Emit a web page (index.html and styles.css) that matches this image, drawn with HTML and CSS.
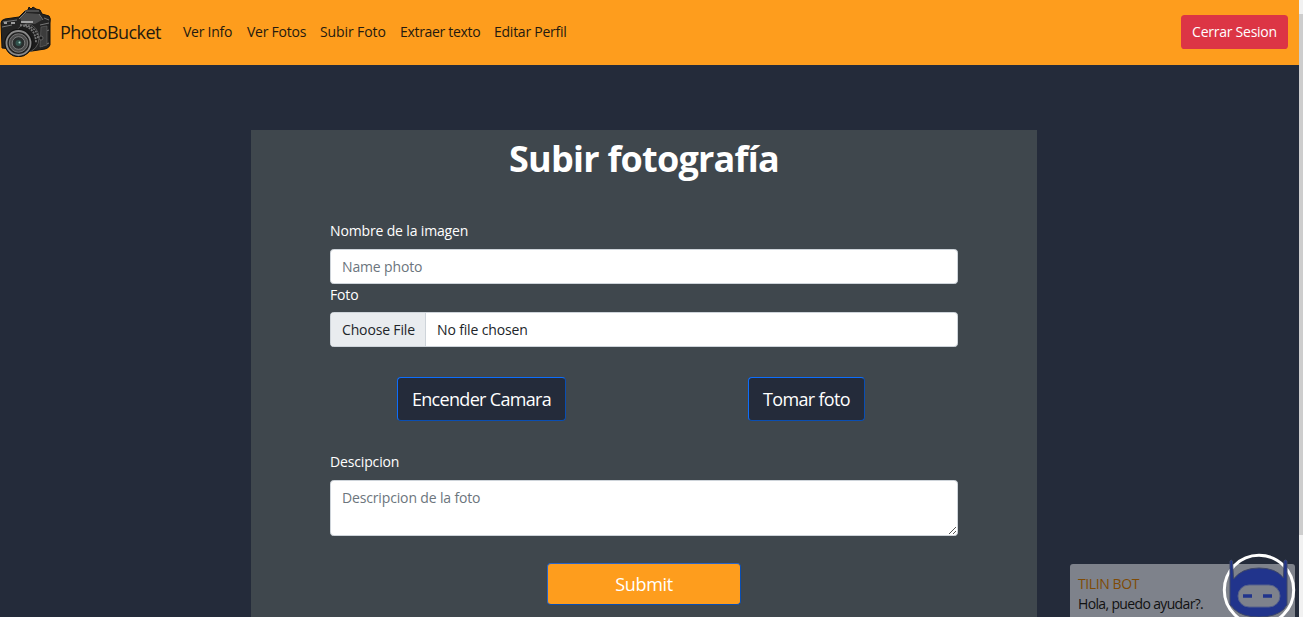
FILE: index.html
```html
<!DOCTYPE html>
<html lang="es">
<head>
<meta charset="utf-8">
<title>PhotoBucket</title>
<link rel="stylesheet" href="styles.css">
</head>
<body>
<div class="page">
  <header class="navbar">
    <svg class="logo" viewBox="0 0 52 52" width="52" height="52">
      <path d="M1 18 Q1 15 5 14 L19 12 25 6 28 5 29 2 31 4 33 2 36 4 40 5 42 9 49 11 Q51 13 50 18 L50 40 Q49 43 45 44 L32 46 2 43 Z" fill="#242424" stroke="#111" stroke-width="1"/>
      <path d="M20 13 L26 8 39 9 42 15 35 19 22 18 Z" fill="#4a4a4a"/>
      <path d="M21 17 L33 17" stroke="#bbb" stroke-width="1.6"/>
      <path d="M19 14 L26 7 M39 9 L43 15 M25 6 L39 6" stroke="#777" stroke-width="1"/>
      <path d="M3 17 L17 15 M2 22 L12 20 M44 13 L49 15 M40 20 L49 18 M44 27 L49 25 M42 41 L49 38" stroke="#777" stroke-width="1"/>
      <path d="M4 18 h3 M11 18 h4" stroke="#c4c4c4" stroke-width="1.5"/>
      <path d="M41 22 L47 21 V40 L40 42 Z" fill="#3c3c3c" stroke="#666" stroke-width=".6"/>
      <circle cx="41" cy="33" r="2" fill="#191919" stroke="#777" stroke-width=".7"/>
      <ellipse cx="27" cy="33" rx="12" ry="14" fill="#1b1b1b" stroke="#555"/>
      <path d="M20 20 Q36 22 36 38 M25 20 Q38 23 38 34" fill="none" stroke="#777" stroke-width="1.8" stroke-dasharray="2 1"/>
      <circle cx="18.500" cy="38" r="13.800" fill="#202020" stroke="#111"/>
      <circle cx="18.500" cy="38" r="12" fill="none" stroke="#8a8a8a" stroke-width="1.800"/>
      <circle cx="18.500" cy="38" r="9.200" fill="#4c4c4c" stroke="#777" stroke-width="1"/>
      <circle cx="18.500" cy="38" r="6.300" fill="#2a2e2e" stroke="#8a8a8a" stroke-width=".8"/>
      <circle cx="18.500" cy="38" r="3" fill="#31534d"/>
      <circle cx="19.500" cy="37.500" r="1" fill="#a7d5c8"/>
    </svg>
    <span class="brand">PhotoBucket</span>
    <nav class="links">
      <a class="l1">Ver Info</a><a class="l2">Ver Fotos</a><a class="l3">Subir Foto</a><a class="l4">Extraer texto</a><a class="l5">Editar Perfil</a>
    </nav>
    <button class="logout">Cerrar Sesion</button>
  </header>
  <main class="panel">
    <h1>Subir fotografía</h1>
    <form class="form">
      <label class="label-name">Nombre de la imagen</label>
      <div class="field placeholder">Name photo</div>
      <label class="label-file">Foto</label>
      <div class="field file"><span class="choose">Choose File</span><span class="chosen">No file chosen</span></div>
      <div class="actions">
        <button type="button" class="btn camera">Encender Camara</button>
        <button type="button" class="btn take">Tomar foto</button>
      </div>
      <label class="label-desc">Descipcion</label>
      <div class="area placeholder"><span>Descripcion de la foto</span>
        <svg class="grip" width="9" height="9" viewBox="0 0 9 9"><path d="M1 8 L8 1 M5 8 L8 5" stroke="#555" stroke-width="1"/></svg>
      </div>
      <button type="button" class="btn submit">Submit</button>
    </form>
  </main>
</div>
<div class="scrollbar"><div class="thumb"></div></div>
<aside class="chat">
  <div class="chat-name">TILIN BOT</div>
  <div class="chat-text">Hola, puedo ayudar?.</div>
</aside>
<svg class="bot" width="74" height="66" viewBox="0 0 74 66">
  <circle cx="37" cy="38" r="34.700" fill="none" stroke="#fff" stroke-width="3"/>
  <path d="M8 9 Q9 7 10.500 9 L11.500 27 Q20 16 37 16 Q54 16 61.500 26 L62 9 Q63.500 7 65 9 V53 Q63 55 62 57 Q54 65 37 65 Q20 65 12 57 Q10 54 8 53 Z" fill="#21348c" stroke="#3d4668" stroke-width="1"/>
  <rect x="16" y="33" width="42" height="22" rx="11" fill="#7e828c" stroke="#56618b" stroke-width="1"/>
  <path d="M21 44 h9 M41 44 h9" stroke="#21348c" stroke-width="3.400"/>
</svg>
</body>
</html>
```
FILE: styles.css
```css
* { box-sizing: border-box; }
body {
  margin: 0;
  width: 1303px;
  height: 617px;
  overflow: hidden;
  display: flex;
  background: #242b3a;
  color: #fff;
  font: 14px/22px "Open Sans", "Noto Sans", sans-serif;
  letter-spacing: -0.15px;
}
button { font: inherit; letter-spacing: inherit; color: #fff; padding: 0; white-space: nowrap; }
.page { width: 1299px; height: 617px; overflow: hidden; }
.navbar {
  height: 65px;
  background: #fe9d1d;
  color: #241a10;
  display: flex;
  align-items: center;
  padding: 0 11px 2px 0;
  letter-spacing: -0.25px;
}
.logo { display: block; margin-top: -1px; height: 52px; }
.brand { font-size: 18px; width: 131px; padding-left: 8px; letter-spacing: -0.58px; white-space: nowrap; }
.links { display: flex; flex: 1; white-space: nowrap; }
.l1 { width: 64px; }
.l2 { width: 73px; }
.l3 { width: 80px; letter-spacing: -0.1px; }
.l4 { width: 94px; letter-spacing: -0.32px; }
.logout {
  width: 107px;
  height: 34px;
  border: 0;
  border-radius: 3.600px;
  background: #dc3545;
}
.panel {
  width: 786px;
  height: 487px;
  margin: 65px 0 0 251px;
  background: #3f474d;
}
h1 {
  margin: 0;
  padding-top: 8px;
  height: 91px;
  font-size: 36px;
  line-height: 42px;
  font-weight: 700;
  letter-spacing: -0.77px;
  text-align: center;
  white-space: nowrap;
}
.form { width: 628px; margin-left: 79px; display: flex; flex-direction: column; }
.form label { height: 28px; line-height: 21px; align-self: flex-start; white-space: nowrap; }
.form .label-name, .form .label-desc { line-height: 19px; }
.field {
  height: 35px;
  border: 1px solid #ced4da;
  border-radius: 3.600px;
  background: #fff;
  line-height: 33px;
  padding-left: 11px;
}
.placeholder { color: #6c757d; }
.file { display: flex; padding: 0; color: #212529; overflow: hidden; line-height: 34px; }
.choose { width: 95px; padding-left: 11px; background: #e9ecef; border-right: 1px solid #ced4da; }
.chosen { padding-left: 11px; }
.actions { display: flex; padding: 30px 93px 0 67px; justify-content: space-between; height: 105px; }
.btn {
  height: 44px;
  font-size: 18px;
  background: #242b3a;
  border: 1px solid;
  border-color: #0d6efd #0a4eb2 #0a4eb2 #0d6efd;
  border-radius: 4px;
  letter-spacing: -0.68px;
}
.camera { width: 169px; }
.take { width: 117px; }
.area {
  height: 56px;
  border: 1px solid #ced4da;
  border-radius: 3.600px;
  background: #fff;
  padding: 6px 11px;
  display: flex;
  justify-content: space-between;
}
.grip { align-self: flex-end; margin: 0 -11px -6px 0; }
.submit { margin: 27px 0 0 217px; width: 194px; height: 42px; letter-spacing: -0.35px; background: #fe9d1d; border-color: #2864c8 #0a4eb2 #0a4eb2 #2864c8; }
.scrollbar { width: 4px; height: 617px; padding-top: 14px; background: #f1f1f1; }
.thumb { height: 521px; background: #cdcdcd; }
.chat {
  position: absolute;
  left: 1070px;
  top: 564px;
  width: 225px;
  height: 53px;
  padding: 10px 0 0 8px;
  border-radius: 3px 3px 0 0;
  background: #7e828b;
  color: #111;
  line-height: 20px;
  white-space: nowrap;
  overflow: hidden;
}
.chat-name { color: #7f4b05; font-weight: 500; letter-spacing: -0.4px; }
.chat-text { letter-spacing: -0.65px; }
.bot { position: absolute; left: 1222px; top: 552px; }
```
